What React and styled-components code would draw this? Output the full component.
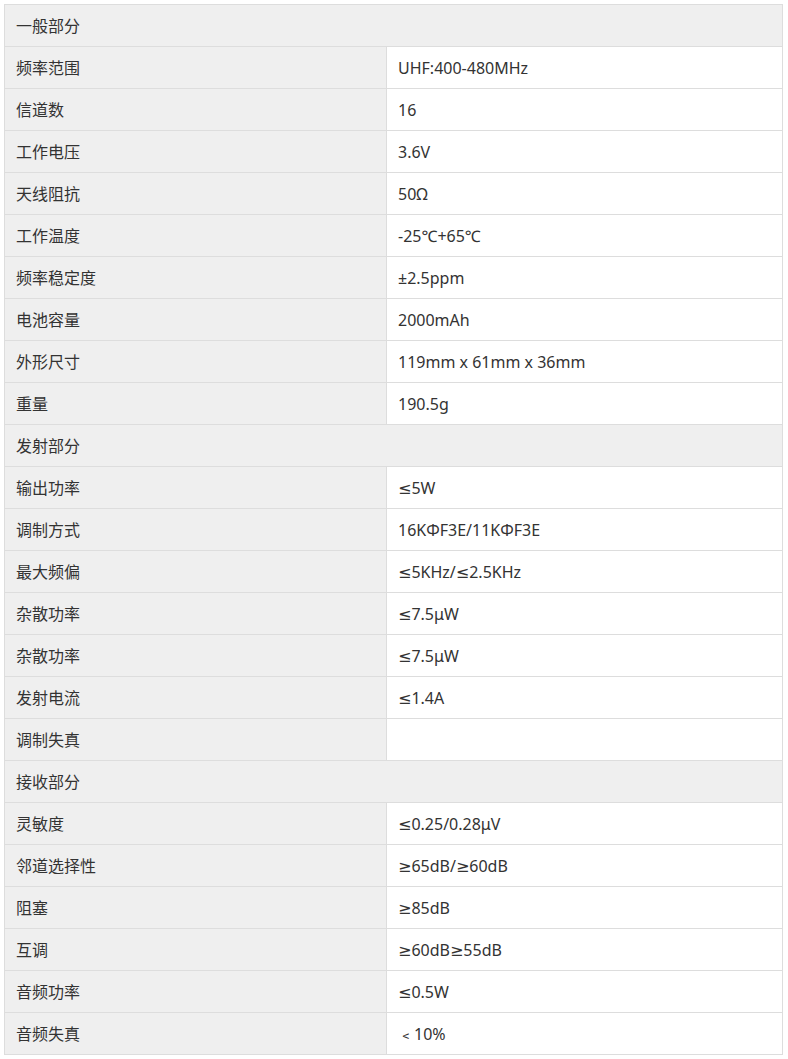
import React from 'react'
import styled, { createGlobalStyle } from 'styled-components'

const GlobalStyle = createGlobalStyle`
  body {
    margin: 4px;
    background: #fff;
    font-family: "Noto Sans", "DejaVu Sans", "Noto Sans CJK SC", sans-serif;
  }
`

const Table = styled.table`
  width: 779px;
  border-collapse: collapse;
  table-layout: fixed;
  font-size: 16px;
  color: #333;
`

const Cell = styled.td`
  height: 41px;
  padding: 0 11px;
  border: 1px solid #ddd;
  background: ${(p) => (p.$shaded ? '#efefef' : '#fff')};
  vertical-align: middle;
  white-space: nowrap;
  line-height: 20px;
`

const sections = [
  {
    title: '一般部分',
    rows: [
      ['频率范围', 'UHF:400-480MHz'],
      ['信道数', '16'],
      ['工作电压', '3.6V'],
      ['天线阻抗', '50Ω'],
      ['工作温度', '-25℃+65℃'],
      ['频率稳定度', '±2.5ppm'],
      ['电池容量', '2000mAh'],
      ['外形尺寸', '119mm x 61mm x 36mm'],
      ['重量', '190.5g'],
    ],
  },
  {
    title: '发射部分',
    rows: [
      ['输出功率', '≤5W'],
      ['调制方式', '16KΦF3E/11KΦF3E'],
      ['最大频偏', '≤5KHz/≤2.5KHz'],
      ['杂散功率', '≤7.5μW'],
      ['杂散功率', '≤7.5μW'],
      ['发射电流', '≤1.4A'],
      ['调制失真', ''],
    ],
  },
  {
    title: '接收部分',
    rows: [
      ['灵敏度', '≤0.25/0.28μV'],
      ['邻道选择性', '≥65dB/≥60dB'],
      ['阻塞', '≥85dB'],
      ['互调', '≥60dB≥55dB'],
      ['音频功率', '≤0.5W'],
      ['音频失真', '﹤10%'],
    ],
  },
]

export default function App() {
  return (
    <>
      <GlobalStyle />
      <Table>
        <colgroup>
          <col style={{ width: 382 }} />
          <col />
        </colgroup>
        <tbody>
          {sections.map((s) => (
            <React.Fragment key={s.title}>
              <tr>
                <Cell $shaded colSpan={2}>
                  {s.title}
                </Cell>
              </tr>
              {s.rows.map(([k, v], i) => (
                <tr key={s.title + i}>
                  <Cell $shaded>{k}</Cell>
                  <Cell>{v}</Cell>
                </tr>
              ))}
            </React.Fragment>
          ))}
        </tbody>
      </Table>
    </>
  )
}
